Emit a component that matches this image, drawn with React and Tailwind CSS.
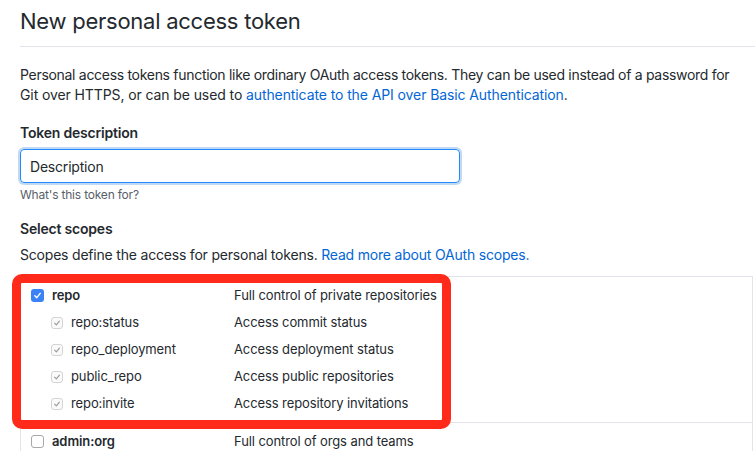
const scopes = [
  { name: 'repo:status', desc: 'Access commit status' },
  { name: 'repo_deployment', desc: 'Access deployment status' },
  { name: 'public_repo', desc: 'Access public repositories' },
  { name: 'repo:invite', desc: 'Access repository invitations' },
];

function Box({ state }) {
  if (state === 'on') {
    return (
      <span className="flex h-[13px] w-[13px] items-center justify-center rounded-[3px] bg-[#3b82f6]">
        <svg width="9" height="9" viewBox="0 0 10 10" fill="none">
          <path d="M2 5.2 4.2 7.4 8 2.6" stroke="white" strokeWidth="1.6" strokeLinecap="round" strokeLinejoin="round" />
        </svg>
      </span>
    );
  }
  if (state === 'dim') {
    return (
      <span className="flex h-[12px] w-[12px] items-center justify-center rounded-[3px] border border-[#d4d4d4] bg-[#fafafa]">
        <svg width="8" height="8" viewBox="0 0 10 10" fill="none">
          <path d="M2 5.2 4.2 7.4 8 2.6" stroke="#9a9a9a" strokeWidth="1.4" strokeLinecap="round" strokeLinejoin="round" />
        </svg>
      </span>
    );
  }
  return <span className="block h-[13px] w-[13px] rounded-[3px] border border-[#a8a8a8] bg-white" />;
}

export default function App() {
  return (
    <div className="h-[451px] w-[755px] overflow-hidden bg-white pl-[20px] text-[#24292e] tracking-[-0.2px]" style={{ fontFamily: 'Inter, "Liberation Sans", sans-serif' }}>
      <h1 className="pt-[6px] pb-[10px] text-[22px] leading-[30px] font-normal tracking-[-0.25px]">New personal access token</h1>
      <div className="border-t border-[#e1e4e8]" />

      <p className="mt-[18px] text-[14px] leading-[20px] whitespace-nowrap">
        <span className="tracking-[-0.3px]">
          Personal access tokens function like ordinary OAuth access tokens. They can be used instead of a password for
        </span>
        <br />
        <span className="tracking-[-0.1px]">
          Git over HTTPS, or can be used to{' '}
          <a className="text-[#0366d6]">authenticate to the API over Basic Authentication</a>.
        </span>
      </p>

      <div className="mt-[18px] text-[14px] leading-[20px] font-semibold">Token description</div>
      <div className="mt-[6px] flex h-[34px] w-[440px] items-center rounded-[4px] border border-[#2188ff] pl-[9px] text-[14px] shadow-[0_0_0_2px_rgba(3,102,214,0.25)]">
        Description
      </div>
      <div className="mt-[4px] text-[12px] leading-[16px] text-[#586069]">What's this token for?</div>

      <div className="mt-[16px] text-[14px] leading-[20px] font-semibold">Select scopes</div>
      <div className="mt-[6px] text-[14px] leading-[20px]">
        Scopes define the access for personal tokens.{' '}
        <a className="text-[#0366d6]">Read more about OAuth scopes.</a>
      </div>

      <div className="relative mt-[11px] mr-[2px] border border-[#e1e4e8] text-[13px] tracking-[-0.1px]">
        <div className="py-[5px]">
          <div className="flex h-[27px] items-center pl-[10px]">
            <Box state="on" />
            <span className="ml-[8px] w-[182px] font-semibold">repo</span>
            <span>Full control of private repositories</span>
          </div>
          {scopes.map((s) => (
            <div key={s.name} className="flex h-[27px] items-center pl-[30px]">
              <Box state="dim" />
              <span className="ml-[8px] w-[163px]">{s.name}</span>
              <span>{s.desc}</span>
            </div>
          ))}
        </div>
        <div className="flex h-[38px] items-center border-t border-[#e1e4e8] pl-[10px]">
          <Box state="off" />
          <span className="ml-[8px] w-[182px] font-semibold">admin:org</span>
          <span>Full control of orgs and teams</span>
        </div>

        <div className="pointer-events-none absolute top-[-3px] left-[-9px] h-[155px] w-[439px] rounded-[10px] border-[9px] border-[#ff2a1a]" />
      </div>
    </div>
  );
}
